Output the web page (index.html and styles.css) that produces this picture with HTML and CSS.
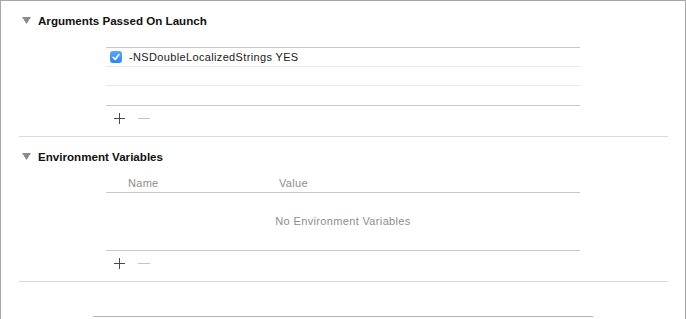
FILE: index.html
```html
<!DOCTYPE html>
<html>
<head>
<meta charset="utf-8">
<link rel="stylesheet" href="styles.css">
</head>
<body>
<div class="window">
  <section class="section">
    <div class="section-header">
      <svg class="disclosure" width="9" height="7" viewBox="0 0 9 7"><path d="M0 0 H9 L4.5 7 Z" fill="#8b8b8b"/></svg>
      <span class="section-title">Arguments Passed On Launch</span>
    </div>
    <div class="table args">
      <div class="row">
        <span class="checkbox">
          <svg width="12" height="12" viewBox="0 0 12 12"><path d="M3.2 6.3 L5.2 8.4 L8.9 3.6" fill="none" stroke="#fff" stroke-width="1.6" stroke-linecap="round" stroke-linejoin="round"/></svg>
        </span>
        <span class="arg-text">-NSDoubleLocalizedStrings YES</span>
      </div>
      <div class="row"></div>
      <div class="row last"></div>
    </div>
    <div class="toolbar">
      <svg class="btn" width="11" height="11" viewBox="0 0 11 11"><path d="M5.5 0 V11 M0 5.5 H11" stroke="#4a4a4a" stroke-width="1"/></svg>
      <svg class="btn" width="12" height="11" viewBox="0 0 12 11"><path d="M0 5.5 H12" stroke="#c4c4c4" stroke-width="1"/></svg>
    </div>
  </section>
  <section class="section">
    <div class="section-header">
      <svg class="disclosure" width="9" height="7" viewBox="0 0 9 7"><path d="M0 0 H9 L4.5 7 Z" fill="#8b8b8b"/></svg>
      <span class="section-title">Environment Variables</span>
    </div>
    <div class="table env">
      <div class="table-head">
        <span class="col-name">Name</span>
        <span class="col-value">Value</span>
      </div>
      <div class="empty">No Environment Variables</div>
    </div>
    <div class="toolbar">
      <svg class="btn" width="11" height="11" viewBox="0 0 11 11"><path d="M5.5 0 V11 M0 5.5 H11" stroke="#4a4a4a" stroke-width="1"/></svg>
      <svg class="btn" width="12" height="11" viewBox="0 0 12 11"><path d="M0 5.5 H12" stroke="#c4c4c4" stroke-width="1"/></svg>
    </div>
  </section>
  <div class="next-table"></div>
</div>
</body>
</html>
```
FILE: styles.css
```css
html, body {
  margin: 0;
  padding: 0;
  background: #fff;
}
body {
  font-family: "Liberation Sans", Arial, sans-serif;
  color: #1a1a1a;
}
.window {
  width: 686px;
  height: 319px;
  box-sizing: border-box;
  border: 1px solid #a7a7a7;
  border-bottom: none;
  overflow: hidden;
}
.section {
  margin: 0 17px 0 18px;
  border-bottom: 1px solid #d9d9d9;
}
.section-header {
  display: flex;
  align-items: center;
  padding: 12px 0 0 3px;
  height: 15px;
  line-height: 15px;
}
.disclosure {
  display: block;
  margin-top: 0;
}
.section-title {
  margin-left: 7px;
  font-size: 11.6px;
  font-weight: bold;
  color: #111;
}
.table {
  margin-left: 87px;
  width: 474px;
}
.args {
  margin-top: 19px;
  border-top: 1px solid #c9c9c9;
  border-bottom: 1px solid #c9c9c9;
}
.row {
  display: flex;
  align-items: center;
  height: 18px;
  border-bottom: 1px solid #e9e9e9;
  font-size: 11px;
}
.row.last {
  height: 19px;
  border-bottom: none;
}
.checkbox {
  width: 12px;
  height: 12px;
  margin-left: 4px;
  border-radius: 3px;
  background: linear-gradient(#5aa7fb, #2f86ef);
  display: flex;
}
.arg-text {
  margin-left: 7px;
  color: #1a1a1a;
  line-height: 18px;
  letter-spacing: 0.35px;
}
.toolbar {
  height: 30px;
  display: flex;
  align-items: flex-start;
  gap: 13px;
  padding-left: 95px;
  box-sizing: border-box;
  padding-top: 7px;
}
.btn {
  display: block;
}
.env {
  border-bottom: 1px solid #c9c9c9;
}
.table-head {
  display: flex;
  padding: 12px 0 2px;
  line-height: 14px;
  font-size: 11px;
  letter-spacing: 0.3px;
  color: #8e8e8e;
  border-bottom: 1px solid #c9c9c9;
}
.col-name {
  width: 151px;
  padding-left: 22px;
}
.empty {
  height: 57px;
  line-height: 57px;
  text-align: center;
  font-size: 11px;
  letter-spacing: 0.35px;
  color: #8e8e8e;
}
.next-table {
  margin: 34px 0 0 92px;
  width: 500px;
  border-top: 1px solid #b3b3b3;
}
```
